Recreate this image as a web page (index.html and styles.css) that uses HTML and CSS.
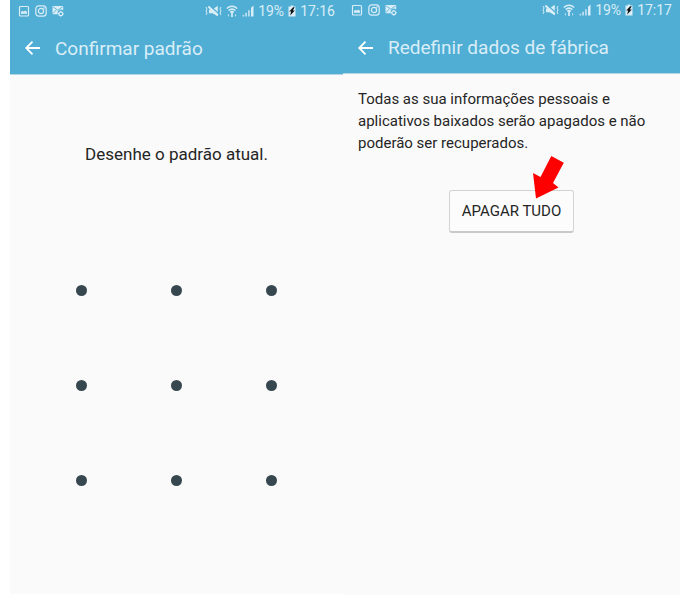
FILE: index.html
```html
<!DOCTYPE html>
<html lang="pt-BR">
<head>
<meta charset="utf-8">
<meta name="viewport" content="width=device-width, initial-scale=1">
<title>Redefinir dados de fábrica</title>
<link rel="stylesheet" href="styles.css">
</head>
<body>
<svg class="symbols" aria-hidden="true">
  <symbol id="picture" viewBox="0 0 12 12"><rect x="1.500" y="1.500" width="9" height="9.500" rx="1" fill="none" stroke="currentColor" stroke-width="1.200"/><path d="M3 8.800V7L4.500 5.800l1.300 1 1.400-1.200L9 7v1.800z" fill="currentColor"/></symbol>
  <symbol id="camera" viewBox="0 0 12 12"><g fill="none" stroke="currentColor" stroke-width="1.2"><rect x=".8" y=".8" width="10.4" height="10.4" rx="3"/><circle cx="6" cy="6" r="2.6"/></g><circle cx="9" cy="3" r=".8" fill="currentColor"/></symbol>
  <symbol id="mail" viewBox="0 0 12 12"><path d="M.5 1h10.7v4.6A3.2 3.2 0 0 0 6 9.2H.5z" fill="currentColor"/><path d="M1 1.8l4.8 3.4 4.9-3.4M1 8.6l3.2-3.7" fill="none" stroke="#50add4" stroke-width=".8"/><circle cx="8.8" cy="8.8" r="1.9" fill="none" stroke="currentColor" stroke-width="1.2"/><path d="M8.8 5.9v1.3M8.8 10.4v1.3M5.9 8.8h1.3M10.4 8.8h1.3" stroke="currentColor"/></symbol>
  <symbol id="mute" viewBox="0 0 17 12"><path d="M4 4.500H7.500L12.800.8v10.400L7.500 8.200H4z" fill="currentColor"/><path d="M4.800.8l8.800 7.800" stroke="#50add4" stroke-width="1.300"/><path d="M3.400 1.500l9.400 8.700" stroke="currentColor" stroke-width="1.900"/><path d="M1 2L2 4 1 6l1 2-1 2M16 2l-1 2 1 2-1 2 1 2" fill="none" stroke="currentColor" stroke-width="1"/></symbol>
  <symbol id="wifi" viewBox="0 0 12 12"><path d="M.8 3.500Q6-1 11.200 3.500M2.600 5.500q3.400-2.800 6.800 0M4.200 7.300q1.800-1.400 3.600 0" fill="none" stroke="currentColor" stroke-width="1.500"/><path d="M5 7h2v5H5zM3 8.800v3L1.600 10.300zM9 8.800v3l1.400-1.500z" fill="currentColor" opacity=".85"/></symbol>
  <symbol id="signal" viewBox="0 0 12 12"><path d="M.5 11.5V9.8h1.800v1.700zM3.200 11.500V7.800H5v3.700zM6 11.500V5.200h1.800v6.300z" fill="currentColor" opacity=".75"/><path d="M9 11.500V2.800L11.500.5v11z" fill="currentColor"/></symbol>
  <symbol id="battery" viewBox="0 0 8 12"><path d="M2.700.6h2.600v1h2.200v9.800H.5V1.600h2.200z" fill="currentColor"/><path d="M5.200 2.200L1.200 6.500h1.900L2.200 10.600l4.600-5H4.800l1.900-3.400z" fill="#111"/></symbol>
  <symbol id="back" viewBox="0 0 16 14"><path d="M15 7H1.500M7.500.7L1.200 7l6.300 6.300" fill="none" stroke="currentColor" stroke-width="1.800"/></symbol>
</svg>
<main class="screens">
  <section class="screen pattern-screen">
    <header class="header">
      <div class="status">
        <svg class="icon"><use href="#picture"/></svg>
        <svg class="icon"><use href="#camera"/></svg>
        <svg class="icon"><use href="#mail"/></svg>
        <div class="system">
          <svg class="icon mute"><use href="#mute"/></svg>
          <svg class="icon"><use href="#wifi"/></svg>
          <svg class="icon"><use href="#signal"/></svg>
          <span>19%</span>
          <svg class="icon battery"><use href="#battery"/></svg>
          <time>17:16</time>
        </div>
      </div>
      <div class="bar">
        <button class="back" type="button" aria-label="Voltar"><svg><use href="#back"/></svg></button>
        <h1>Confirmar padrão</h1>
      </div>
    </header>
    <p class="prompt">Desenhe o padrão atual.</p>
    <div class="pattern">
      <i></i><i></i><i></i>
      <i></i><i></i><i></i>
      <i></i><i></i><i></i>
    </div>
  </section>
  <section class="screen reset-screen">
    <header class="header">
      <div class="status">
        <svg class="icon"><use href="#picture"/></svg>
        <svg class="icon"><use href="#camera"/></svg>
        <svg class="icon"><use href="#mail"/></svg>
        <div class="system">
          <svg class="icon mute"><use href="#mute"/></svg>
          <svg class="icon"><use href="#wifi"/></svg>
          <svg class="icon"><use href="#signal"/></svg>
          <span>19%</span>
          <svg class="icon battery"><use href="#battery"/></svg>
          <time>17:17</time>
        </div>
      </div>
      <div class="bar">
        <button class="back" type="button" aria-label="Voltar"><svg><use href="#back"/></svg></button>
        <h1>Redefinir dados de fábrica</h1>
      </div>
    </header>
    <p class="warning">Todas as sua informações pessoais e aplicativos baixados serão apagados e não poderão ser recuperados.</p>
    <div class="action">
      <button class="erase" type="button">APAGAR TUDO</button>
      <svg class="pointer" viewBox="0 0 32 44" aria-hidden="true"><path d="M19.300 1L31.800 7.800 21 28l5.500 4.500L4 43.400 1 18l7.500 4z" fill="#fe0000"/></svg>
    </div>
  </section>
</main>
</body>
</html>
```
FILE: styles.css
```css
* {
  box-sizing: border-box;
}

body {
  margin: 0;
  background: #fff;
  color: #252525;
  font-family: Roboto, "Liberation Sans", sans-serif;
}

.symbols {
  position: absolute;
  width: 0;
  height: 0;
}

.screens {
  display: grid;
  grid-template-columns: 333fr 337fr;
  min-height: 100vh;
  padding: 0 15px 0 10px;
}

.screen {
  background: #fafafa;
}

.pattern-screen {
  margin-bottom: 1px;
}

.header {
  background: #50add4;
  border-bottom: 1px solid #b5d5e3;
  color: #d9eef7;
}

.status {
  display: flex;
  align-items: center;
  gap: 5px;
  height: 22px;
  padding: 0 8px;
  font-size: 14px;
}

.reset-screen .status {
  height: 20px;
}

.system {
  display: flex;
  align-items: center;
  gap: 4px;
  margin-left: auto;
}

.icon {
  width: 12px;
  height: 12px;
}

.mute {
  width: 17px;
}

.battery {
  width: 8px;
}

.bar {
  display: flex;
  align-items: center;
  gap: 14px;
  height: 52px;
  padding: 0 15px;
}

.reset-screen .bar {
  height: 53px;
  padding-top: 2px;
}

.back {
  display: flex;
  padding: 0;
  border: 0;
  background: none;
  color: #fff;
}

.back svg {
  width: 16px;
  height: 14px;
}

h1 {
  margin: 0;
  font-size: 19px;
  font-weight: 400;
}

.prompt {
  margin: 67px 0 77px;
  font-size: 17px;
  line-height: 24px;
  text-align: center;
}

.pattern {
  display: grid;
  grid-template-columns: repeat(3, 95px);
  grid-auto-rows: 95px;
  place-content: center;
  place-items: center;
}

.pattern i {
  width: 11px;
  height: 11px;
  border-radius: 50%;
  background: #37474f;
}

.warning {
  margin: 0;
  padding: 14px 15px 0;
  font-size: 15px;
  line-height: 22px;
}

.action {
  position: relative;
  width: fit-content;
  margin: 36px auto 0;
}

.erase {
  height: 43px;
  padding: 0 12px;
  border: 1px solid #d3d3d3;
  border-bottom: 2px solid #c9c9c9;
  border-radius: 3px;
  background: #fcfcfc;
  color: #252525;
  font: 15px Roboto, "Liberation Sans", sans-serif;
}

.pointer {
  position: absolute;
  top: -35px;
  right: 10px;
  width: 32px;
  height: 44px;
}
```
